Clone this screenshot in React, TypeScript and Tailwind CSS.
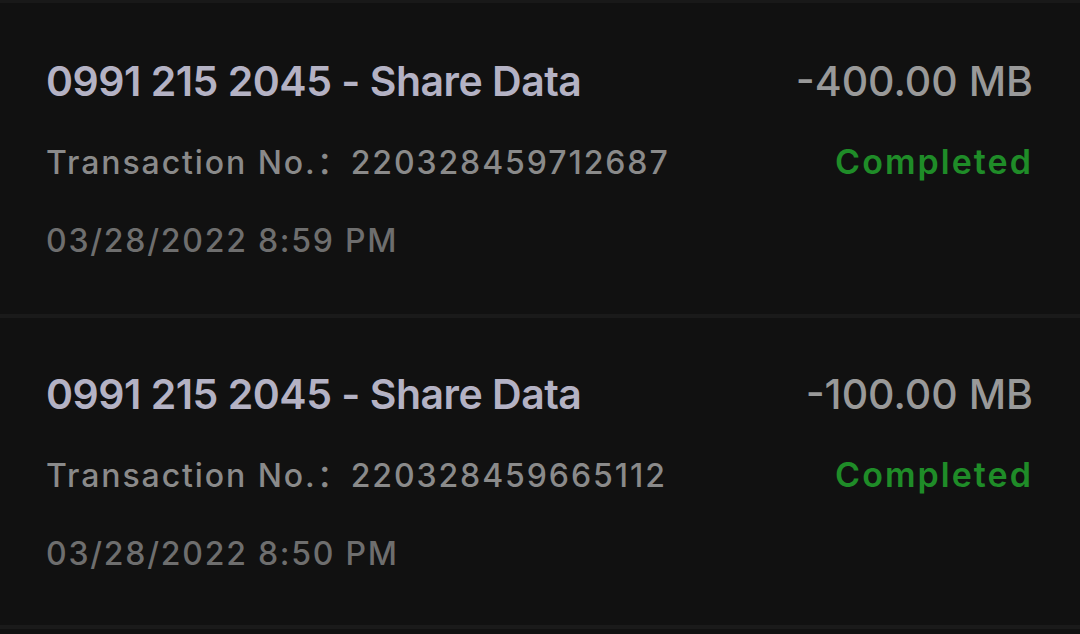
import React from "react";

const rows = [
  { title: "0991 215 2045 - Share Data", amount: "-400.00 MB", no: "220328459712687", date: "03/28/2022 8:59 PM" },
  { title: "0991 215 2045 - Share Data", amount: "-100.00 MB", no: "220328459665112", date: "03/28/2022 8:50 PM" },
];

export default function App() {
  return (
    <div className="w-[1080px] h-[634px] overflow-hidden bg-[#111111] border-t-[3px] border-[#191919]" style={{ fontFamily: 'Inter, "Noto Sans CJK SC", sans-serif' }}>
      {rows.map((r, i) => (
        <div key={i} className={`${i === 0 ? "h-[315px] pt-[52px]" : "h-[311px] pt-[50px]"} border-b-[4px] border-[#1a1a1a] pl-[46px] pr-[47px] flex flex-col`}>
          <div className="flex justify-between items-baseline">
            <span className="text-[41px] leading-[52px] font-semibold tracking-[-0.012em] text-[#b4b2c4]">{r.title}</span>
            <span className="text-[41px] leading-[52px] font-medium text-[#999999]">{r.amount}</span>
          </div>
          <div className="flex justify-between items-baseline mt-[35px]">
            <span className="text-[32px] leading-[40px] font-medium tracking-[0.06em] text-[#8a8a8a]">
              Transaction No.<span>：</span>{r.no}
            </span>
            <span className="text-[34px] leading-[40px] font-semibold tracking-[0.06em] text-[#1f8c28]">Completed</span>
          </div>
          <div className="mt-[38px] text-[32px] leading-[40px] font-medium tracking-[0.055em] text-[#6e6e6e]">{r.date}</div>
        </div>
      ))}
    </div>
  );
}
